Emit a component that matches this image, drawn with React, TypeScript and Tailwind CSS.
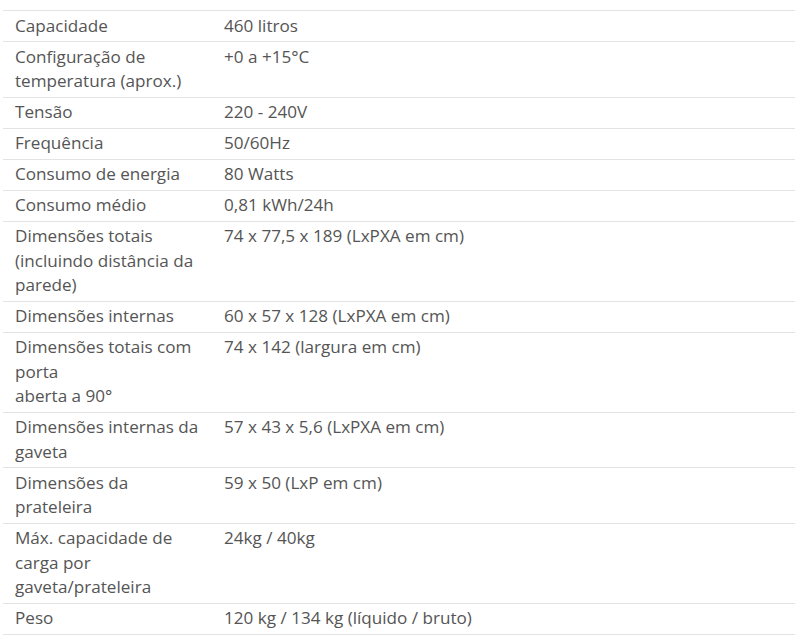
import React from "react";

const rows: [React.ReactNode, string][] = [
  ["Capacidade", "460 litros"],
  ["Configuração de temperatura (aprox.)", "+0 a +15°C"],
  ["Tensão", "220 - 240V"],
  ["Frequência", "50/60Hz"],
  ["Consumo de energia", "80 Watts"],
  ["Consumo médio", "0,81 kWh/24h"],
  ["Dimensões totais (incluindo distância da parede)", "74 x 77,5 x 189 (LxPXA em cm)"],
  ["Dimensões internas", "60 x 57 x 128 (LxPXA em cm)"],
  [
    <>
      Dimensões totais com porta
      <br />
      aberta a 90°
    </>,
    "74 x 142 (largura em cm)",
  ],
  ["Dimensões internas da gaveta", "57 x 43 x 5,6 (LxPXA em cm)"],
  ["Dimensões da prateleira", "59 x 50 (LxP em cm)"],
  ["Máx. capacidade de carga por gaveta/prateleira", "24kg / 40kg"],
  ["Peso", "120 kg / 134 kg (líquido / bruto)"],
];

export default function App() {
  return (
    <div
      className="bg-white w-[800px] h-[642px] pt-[10px] pl-[3px] pr-[5px] text-[#555] text-[17.1px] leading-[24.5px]"
      style={{ fontFamily: '"Open Sans", sans-serif' }}
    >
      <div className="flex flex-col border-t border-[#e3e3e3]">
        {rows.map(([k, v], i) => (
          <div key={i} className="flex border-b border-[#e3e3e3] pt-[2.5px] pb-[3px]">
            <div className="w-[202px] shrink-0 pl-3">{k}</div>
            <div className="pl-[19px]">{v}</div>
          </div>
        ))}
      </div>
    </div>
  );
}
